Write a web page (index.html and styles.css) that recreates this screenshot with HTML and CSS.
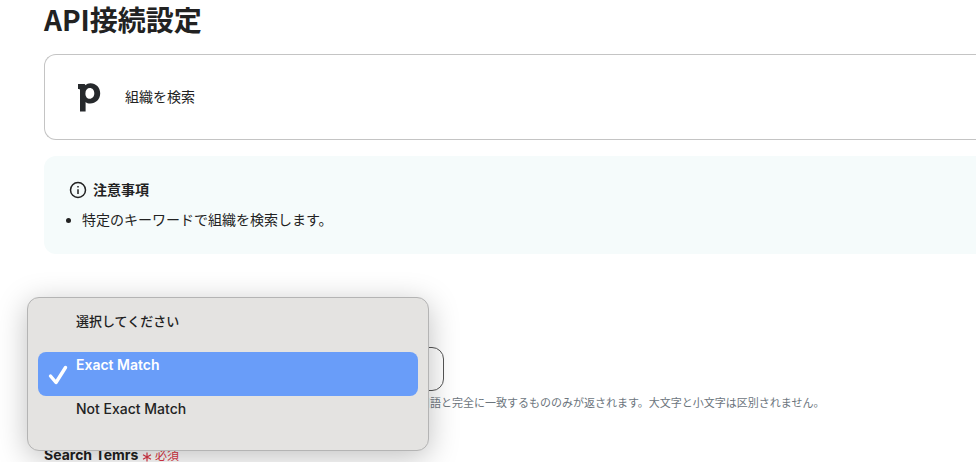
FILE: index.html
```html
<!DOCTYPE html>
<html lang="ja">
<head>
    <meta charset="UTF-8">
    <meta name="viewport" content="width=device-width, initial-scale=1.0">
    <title>API接続設定</title>
    <link rel="stylesheet" href="styles.css">
</head>
<body>
    <main class="page">
        <h1 class="page-title">API接続設定</h1>

        <section class="api-card">
            <svg class="api-logo" width="24" height="30" viewBox="0 0 24 30" aria-hidden="true">
                <path fill="#26292c" fill-rule="evenodd" d="M1 2H7.4Q8.1 2 8.4 3.2C9.6 1.9 11.4 1.2 13.4 1.2C18.9 1.2 23.2 5.4 23.2 11.3C23.2 17.3 18.7 21.6 13.2 21.6C11.2 21.6 9.7 20.9 8.6 19.9V29.5H3V8Q3 6.9 1.9 6.9H1ZM12.8 6C10.4 6 8.4 7.9 8.4 11.4C8.4 14.6 10.3 16.8 12.7 16.8C15.3 16.8 17.3 14.5 17.3 11.3C17.3 8.2 15.4 6 12.8 6Z"/>
            </svg>
            <span>組織を検索</span>
        </section>

        <section class="notice">
            <h2 class="notice-title">
                <svg width="18" height="18" viewBox="0 0 18 18" fill="none" stroke="#222" stroke-width="1.5" aria-hidden="true">
                    <circle cx="9" cy="9" r="7.5"/>
                    <path d="M9 8.2V13M9 5V6.6"/>
                </svg>
                注意事項
            </h2>
            <ul class="notice-list">
                <li>特定のキーワードで組織を検索します。</li>
            </ul>
        </section>

        <form class="api-form">
            <div class="field">
                <label class="field-label" for="exact-match">Exact Match</label>
                <div class="select-wrap">
                    <select class="field-select" id="exact-match">
                        <option>選択してください</option>
                        <option selected>Exact Match</option>
                        <option>Not Exact Match</option>
                    </select>
                    <div class="menu" role="listbox" aria-label="Exact Match">
                        <button class="menu-item" type="button" role="option" aria-selected="false">選択してください</button>
                        <button class="menu-item selected" type="button" role="option" aria-selected="true">
                            <svg class="menu-check" width="20" height="20" viewBox="0 0 20 20" fill="none" stroke="#fff" stroke-width="3.4" stroke-linecap="round" stroke-linejoin="round" aria-hidden="true">
                                <path d="M2.5 11L8 17.5L17.5 2.5"/>
                            </svg>
                            <span class="menu-text">Exact Match</span>
                        </button>
                        <button class="menu-item" type="button" role="option" aria-selected="false"><span class="menu-text">Not Exact Match</span></button>
                    </div>
                </div>
                <p class="field-hint">完全一致で検索するかどうかを選択します。有効にした場合、指定した検索用語と完全に一致するもののみが返されます。大文字と小文字は区別されません。</p>
            </div>
            <div class="field">
                <label class="field-label" for="search-terms">Search Temrs <span class="required"><svg class="required-mark" width="10" height="10" viewBox="0 0 10 10" stroke="#dc3545" stroke-width="1.2" aria-hidden="true"><path d="M5 .5V9.5M1 2.7L9 7.3M9 2.7L1 7.3"/></svg> 必須</span></label>
                <input class="field-input" id="search-terms" type="text">
            </div>
        </form>
    </main>
</body>
</html>
```
FILE: styles.css
```css
* {
    box-sizing: border-box;
}

body {
    margin: 0;
    background-color: #fff;
    color: #222;
    font-family: Inter, "Noto Sans CJK JP", sans-serif;
    font-size: 14px;
    line-height: 20px;
    overflow: hidden;
}

.page {
    padding-left: 44px;
}

.page-title {
    margin: 0;
    padding-bottom: 16px;
    font-family: "Noto Sans CJK JP", sans-serif;
    font-size: 28px;
    font-weight: 700;
    line-height: 38px;
}

.api-card {
    display: flex;
    align-items: center;
    gap: 24px;
    height: 86px;
    padding: 0 32px;
    border: 1px solid #c4c4c4;
    border-right: none;
    border-radius: 12px 0 0 12px;
}

.notice {
    margin-top: 16px;
    padding: 24px;
    background-color: #f5fbfb;
    border-radius: 12px 0 0 12px;
}

.notice-title {
    display: flex;
    align-items: center;
    gap: 6px;
    margin: 0 0 10px;
    padding-left: 1px;
    font-size: 14px;
    font-weight: 700;
}

.notice-list {
    margin: 0;
    padding-left: 14px;
}

.api-form {
    margin-top: 60px;
}

.field {
    margin-bottom: 32px;
}

.field-label {
    display: block;
    margin-bottom: 13px;
    font-weight: 700;
}

.select-wrap {
    position: relative;
    width: 400px;
}

.field-select,
.field-input {
    width: 400px;
    height: 44px;
    padding: 0 16px;
    border: 1px solid #555;
    border-radius: 12px;
    background-color: #fff;
    font: inherit;
}

.field-select {
    display: block;
    appearance: none;
}

/* open list, lies over the select */
.menu {
    position: absolute;
    top: -50px;
    left: -17px;
    width: 402px;
    padding: 10px;
    border: 1px solid #b4b4b4;
    border-radius: 12px;
    background-color: #e4e3e1;
    box-shadow: 0 6px 30px rgba(0, 0, 0, 0.25);
}

.menu-item {
    display: flex;
    position: relative;
    width: 100%;
    height: 44px;
    padding: 3px 38px;
    border: none;
    border-radius: 8px;
    background: none;
    color: #222;
    font: inherit;
    font-size: 13px;
    font-weight: 500;
    text-align: left;
}

.menu-text {
    font-size: 14px;
}

.menu-item.selected {
    background-color: #699df9;
    color: #fff;
    font-weight: 600;
}

.menu-check {
    position: absolute;
    top: 13px;
    left: 10px;
}

.field-hint {
    margin: 2px 0 0;
    padding-left: 2px;
    color: #6c757d;
    font-size: 11px;
    white-space: nowrap;
}

.required {
    color: #dc3545;
    font-size: 12px;
    font-weight: 400;
}

.required-mark {
    vertical-align: middle;
}
```
